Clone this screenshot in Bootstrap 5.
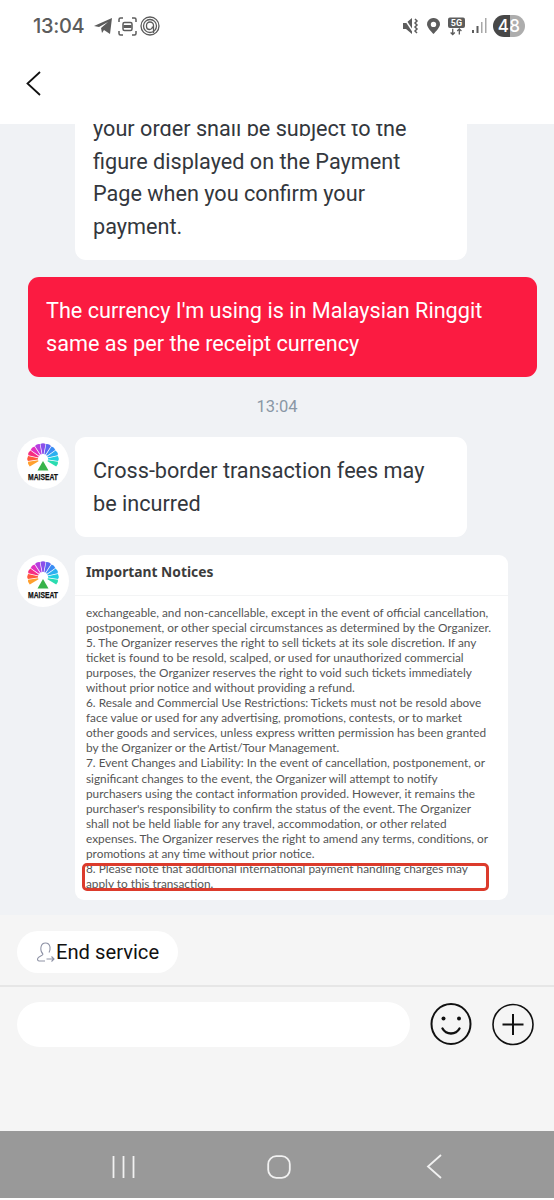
<!DOCTYPE html>
<html lang="en">
<head>
<meta charset="utf-8">
<title>Chat</title>
<link href="https://cdn.jsdelivr.net/npm/bootstrap@5.3.0/dist/css/bootstrap.min.css" rel="stylesheet">
<style>
html,body{margin:0;height:1200px;overflow:hidden;background:#fff;font-family:Roboto,"Liberation Sans",sans-serif}
.shell{width:554px;height:1200px}
.topzone{height:124px;background:#fff;flex:none}
.statusrow{height:52px;padding:0 29px 0 33px;color:#5c5c5c}
.clock{font-family:Inter,Roboto,sans-serif;font-size:20px;font-weight:500;width:52px;margin-right:9px;letter-spacing:-.3px;line-height:1}
.g3{margin-left:3px}.g5{margin-left:5px}.g6{margin-left:6px}.g7{margin-left:7px}.g8{margin-left:8px}
.batt{width:32px;height:22px;border-radius:11px;background:linear-gradient(90deg,#474747 0 52%,#adadad 52%);color:#fff;font:500 17px/22px Inter,Roboto,sans-serif;text-align:center;letter-spacing:.2px}
.backrow{padding:19px 0 0 26px}
.chatzone{height:791px;background:#f0f2f5;overflow:hidden;flex:none}
.chatflow{margin-top:-29px}
.bubble{background:#fff;color:#33373d;border-radius:11px;width:392px;padding:18px 18px 17px;font-size:21.65px;line-height:32.5px;margin-left:75px}
.mine{background:#fb1b41;color:#fff;width:509px;margin:17px 0 0 28px;padding:18px 18px 17px;font-size:21.65px;line-height:32.5px;border-radius:11px}
.stamp{color:#8a97a5;font-size:16.5px;line-height:20px;text-align:center;margin:20px 0}
.msg{padding-left:17px;gap:6px}
.msg .bubble{margin-left:0}
.msgnext{margin-top:18px}
.avatar{width:52px;height:52px;border-radius:50%;background:#fff;flex:none}
.shot{width:433px;height:345px;background:#fff;border-radius:9px;overflow:hidden;position:relative;font-family:Lato,"Noto Sans",sans-serif;color:#555}
.shothead{height:41px;border-bottom:1px solid #f3f4f5;padding:7px 11px 0;font-family:"Noto Sans",sans-serif;font-size:13.8px;font-weight:700;color:#3c3c3c;line-height:20px}
.shotbody{padding:9px 11px 0;font-size:11.82px;line-height:15.05px;white-space:nowrap}
.redmark{position:absolute;left:7px;top:308px;width:407px;height:28px;border:3px solid #dc3b2c;border-radius:5px}
.bottomzone{height:216px;background:#f5f5f5;flex:none}
.endrow{height:72px;padding:16px 0 0 17px;border-bottom:2px solid #e6e6e6}
.endbtn{height:42px;width:161px;background:#fff;border-radius:21px;font-size:20.2px;color:#111;padding-left:20px;line-height:1;gap:1px}
.inputrow{padding:15px 0 0 17px}
.fakeinput{width:393px;height:45px;border-radius:23px;background:#fff}
.roundicon{margin-left:20px;flex:none}
.navzone{height:67px;background:#999;flex:none;padding-top:4px}
.navicons{height:67px;margin-top:-2px}
</style>
</head>
<body>
<svg width="0" height="0" class="position-absolute">
  <symbol id="fan" viewBox="0 0 52 52">
    <g transform="translate(26 22)">
      <path transform="rotate(-110)" fill="#ffa02e" d="M-.6-5-2.600-15Q0-16.500 2.600-15L.6-5Z"/>
      <path transform="rotate(-88)" fill="#ff5a3c" d="M-.6-5-2.600-15Q0-16.500 2.600-15L.6-5Z"/>
      <path transform="rotate(-66)" fill="#f62d7f" d="M-.6-5-2.600-15Q0-16.500 2.600-15L.6-5Z"/>
      <path transform="rotate(-44)" fill="#e22fc0" d="M-.6-5-2.600-15Q0-16.500 2.600-15L.6-5Z"/>
      <path transform="rotate(-22)" fill="#b53ee0" d="M-.6-5-2.600-15Q0-16.500 2.600-15L.6-5Z"/>
      <path transform="rotate(0)" fill="#8a4fea" d="M-.6-5-2.600-15Q0-16.500 2.600-15L.6-5Z"/>
      <path transform="rotate(22)" fill="#5a68f0" d="M-.6-5-2.600-15Q0-16.500 2.600-15L.6-5Z"/>
      <path transform="rotate(44)" fill="#3a8cf4" d="M-.6-5-2.600-15Q0-16.500 2.600-15L.6-5Z"/>
      <path transform="rotate(66)" fill="#2bb0f0" d="M-.6-5-2.600-15Q0-16.500 2.600-15L.6-5Z"/>
      <path transform="rotate(88)" fill="#22cfe0" d="M-.6-5-2.600-15Q0-16.500 2.600-15L.6-5Z"/>
      <path transform="rotate(110)" fill="#2adcb0" d="M-.6-5-2.600-15Q0-16.500 2.600-15L.6-5Z"/>
    </g>
    <path d="M26 24 31.500 33.500H20.500Z" fill="#37b34a"/>
  </symbol>
</svg>
<div class="shell d-flex flex-column">
  <div class="topzone">
    <div class="statusrow d-flex align-items-center">
      <span class="clock">13:04</span>
      <svg width="19" height="18" viewBox="0 0 19 18"><path fill="#5c5c5c" d="M0 9 18 1 16 17 10 13 8 16 7 11 14 5 5 10Z"/></svg>
      <svg width="19" height="19" viewBox="0 0 19 19" class="g5" fill="none" stroke="#5c5c5c" stroke-width="1.5"><path d="M1 5V2.500A1.500 1.500 0 0 1 2.500 1H5M14 1h2.500A1.500 1.500 0 0 1 18 2.500V5M18 14v2.500A1.500 1.500 0 0 1 16.500 18H14M5 18H2.500A1.500 1.500 0 0 1 1 16.500V14"/><rect x="5" y="5.500" width="9" height="8" rx="1.500"/><path d="M5.500 9.500h8" stroke-width="3"/></svg>
      <svg width="20" height="20" viewBox="0 0 20 20" class="g3" fill="none" stroke="#5c5c5c" stroke-width="1.300"><circle cx="10" cy="10" r="9"/><circle cx="10" cy="10" r="6.500"/><path d="M13.500 17V9.500a3.500 3.500 0 0 0-7 0v1a3 3 0 0 0 6 0"/></svg>
      <div class="flex-grow-1"></div>
      <svg width="16" height="18" viewBox="0 0 16 18"><path fill="#5c5c5c" d="M0 6h3l6-5v16l-6-5H0Z"/><path d="M1 1 11 16" stroke="#fff" stroke-width="1.500"/><path d="M12 2l2 2-2 2 2 2-2 2 2 2-2 2 2 2" fill="none" stroke="#5c5c5c" stroke-width="1.500"/></svg>
      <svg width="13" height="16" viewBox="0 0 13 16" class="g8"><path fill="#5c5c5c" fill-rule="evenodd" d="M6.500 0A6.300 6.300 0 0 1 13 6.300C13 10 6.500 16 6.500 16S0 10 0 6.300A6.300 6.300 0 0 1 6.500 0Zm0 3.700a2.700 2.700 0 1 0 0 5.400 2.700 2.700 0 0 0 0-5.400Z"/></svg>
      <svg width="17" height="19" viewBox="0 0 18 19" class="g8"><rect x="0" y="0" width="18" height="11" rx="2" fill="#5c5c5c"/><text x="9" y="9" text-anchor="middle" font-family="Roboto,sans-serif" font-weight="700" font-size="9.500" fill="#fff">5G</text><path d="M5 12v6M2.800 15.800 5 18l2.200-2.200M12 18v-6M9.800 14.200 12 12l2.200 2.200" fill="none" stroke="#5c5c5c" stroke-width="1.400"/></svg>
      <svg width="15" height="16" viewBox="0 0 15 16" class="g7"><rect x="0" y="12" width="2" height="3" fill="#5c5c5c"/><rect x="4.500" y="8" width="2" height="7" fill="#5c5c5c"/><rect x="9" y="4" width="1.500" height="11" fill="#a8a8a8"/><rect x="13" y="0" width="1.500" height="15" fill="#a8a8a8"/></svg>
      <div class="batt g6">48</div>
    </div>
    <div class="backrow">
      <svg width="15" height="25" viewBox="0 0 15 25" class="d-block"><path d="M14 1 1.500 12.500 14 24" fill="none" stroke="#111" stroke-width="1.800"/></svg>
    </div>
  </div>

  <div class="chatzone">
    <div class="chatflow">
      <div class="bubble">your order shall be subject to the figure displayed on the Payment Page when you confirm your payment.</div>
      <div class="mine">The currency I'm using is in Malaysian Ringgit same as per the receipt currency</div>
      <div class="stamp">13:04</div>
      <div class="msg d-flex">
        <svg class="avatar" viewBox="0 0 52 52" aria-label="MAISEAT logo">
          <use href="#fan" x="0" y="0" width="52" height="52"/>
          <text x="26" y="42.500" text-anchor="middle" font-family="Liberation Sans,sans-serif" font-weight="700" font-size="8.400" fill="#111" stroke="#111" stroke-width=".25" textLength="30" lengthAdjust="spacingAndGlyphs">MAISEAT</text>
        </svg>
        <div class="bubble">Cross-border transaction fees may be incurred</div>
      </div>
      <div class="msg msgnext d-flex">
        <svg class="avatar" viewBox="0 0 52 52" aria-label="MAISEAT logo">
          <use href="#fan" x="0" y="0" width="52" height="52"/>
          <text x="26" y="42.500" text-anchor="middle" font-family="Liberation Sans,sans-serif" font-weight="700" font-size="8.400" fill="#111" stroke="#111" stroke-width=".25" textLength="30" lengthAdjust="spacingAndGlyphs">MAISEAT</text>
        </svg>
        <div class="shot">
          <div class="shothead">Important Notices</div>
          <div class="shotbody">exchangeable, and non-cancellable, except in the event of official cancellation,<br>postponement, or other special circumstances as determined by the Organizer.<br>5. The Organizer reserves the right to sell tickets at its sole discretion. If any<br>ticket is found to be resold, scalped, or used for unauthorized commercial<br>purposes, the Organizer reserves the right to void such tickets immediately<br>without prior notice and without providing a refund.<br>6. Resale and Commercial Use Restrictions: Tickets must not be resold above<br>face value or used for any advertising, promotions, contests, or to market<br>other goods and services, unless express written permission has been granted<br>by the Organizer or the Artist/Tour Management.<br>7. Event Changes and Liability: In the event of cancellation, postponement, or<br>significant changes to the event, the Organizer will attempt to notify<br>purchasers using the contact information provided. However, it remains the<br>purchaser's responsibility to confirm the status of the event. The Organizer<br>shall not be held liable for any travel, accommodation, or other related<br>expenses. The Organizer reserves the right to amend any terms, conditions, or<br>promotions at any time without prior notice.<br>8. Please note that additional international payment handling charges may<br>apply to this transaction.</div>
          <div class="redmark"></div>
        </div>
      </div>
    </div>
  </div>

  <div class="bottomzone">
    <div class="endrow">
      <div class="endbtn d-flex align-items-center">
        <svg width="18" height="20" viewBox="0 0 18 20" fill="none" stroke="#8f93a6" stroke-width="1.100"><path d="M6 12C4 10 3.500 7.500 4 5c.5-2.500 2.300-4 4.500-4S12.500 2.500 13 5c.3 2 0 3.500-1 5.500"/><path d="M6 12c0 2-5 2-5.500 5 0 1 .5 2 1.500 2h6M9.500 17h7.500M14.500 14.500 17 17l-2.500 2.500"/></svg>
        <span>End service</span>
      </div>
    </div>
    <div class="inputrow d-flex">
      <div class="fakeinput"></div>
      <svg width="42" height="44" viewBox="0 0 42 44" class="roundicon" fill="none" stroke="#111" stroke-width="2"><ellipse cx="21" cy="22" rx="19.500" ry="20"/><circle cx="13.500" cy="16.500" r="2" fill="#111" stroke="none"/><circle cx="29" cy="16.500" r="2" fill="#111" stroke="none"/><path d="M12.500 26.500c2 3.500 5 5 8.500 5s6.500-1.500 8.500-5" stroke-width="2.400" stroke-linecap="round"/></svg>
      <svg width="42" height="44" viewBox="0 0 42 44" class="roundicon" fill="none" stroke="#111" stroke-width="1.600"><circle cx="21" cy="22.500" r="20"/><path d="M10.500 22.500h21M21 12v21" stroke-width="2"/></svg>
    </div>
  </div>

  <div class="navzone">
    <div class="navicons d-flex align-items-center">
      <svg width="23" height="24" viewBox="0 0 23 24" fill="none" stroke="#f1f1f1" stroke-width="1.800" style="margin-left:112px"><path d="M1.500 1v22M11.500 1v22M21.500 1v22"/></svg>
      <svg width="24" height="24" viewBox="0 0 24 24" fill="none" stroke="#f1f1f1" stroke-width="1.800" style="margin-left:132px"><rect x="1.200" y="1.200" width="21.600" height="21.600" rx="8"/></svg>
      <svg width="16" height="25" viewBox="0 0 16 25" fill="none" stroke="#f1f1f1" stroke-width="1.800" style="margin-left:135px"><path d="M15 1 2 12.500 15 24"/></svg>
    </div>
  </div>
</div>
</body>
</html>
